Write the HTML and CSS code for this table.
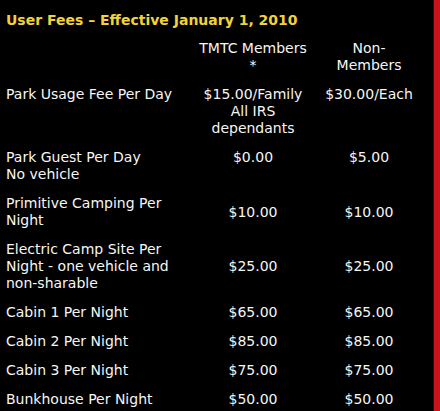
FILE: index.html
```html
<!DOCTYPE html>
<html>
<head>
<meta charset="utf-8">
<link rel="stylesheet" href="styles.css">
</head>
<body>
<div class="page">
  <div class="content">
    <h2 class="title">User Fees – Effective January 1, 2010</h2>
    <table class="fees">
      <colgroup><col class="c1"><col class="c2"><col class="c3"></colgroup>
      <tr class="head top">
        <td></td>
        <td>TMTC Members *</td>
        <td>Non-Members</td>
      </tr>
      <tr class="top">
        <td>Park Usage Fee Per Day</td>
        <td>$15.00/Family All IRS dependants</td>
        <td>$30.00/Each</td>
      </tr>
      <tr class="top">
        <td>Park Guest Per Day<br>No vehicle</td>
        <td>$0.00</td>
        <td>$5.00</td>
      </tr>
      <tr>
        <td>Primitive Camping Per Night</td>
        <td>$10.00</td>
        <td>$10.00</td>
      </tr>
      <tr>
        <td>Electric Camp Site Per Night - one vehicle and non-sharable</td>
        <td>$25.00</td>
        <td>$25.00</td>
      </tr>
      <tr>
        <td>Cabin 1 Per Night</td>
        <td>$65.00</td>
        <td>$65.00</td>
      </tr>
      <tr>
        <td>Cabin 2 Per Night</td>
        <td>$85.00</td>
        <td>$85.00</td>
      </tr>
      <tr>
        <td>Cabin 3 Per Night</td>
        <td>$75.00</td>
        <td>$75.00</td>
      </tr>
      <tr>
        <td>Bunkhouse Per Night</td>
        <td>$50.00</td>
        <td>$50.00</td>
      </tr>
    </table>
  </div>
  <div class="edge"></div>
</div>
</body>
</html>
```
FILE: styles.css
```css
html, body {
  margin: 0;
  padding: 0;
  background: #000;
}
.page {
  display: flex;
  width: 440px;
  height: 411px;
  overflow: hidden;
}
.content {
  flex: 1;
  background: #000;
  color: #f6f6f6;
  font-family: "DejaVu Sans", Verdana, sans-serif;
  font-size: 14px;
  line-height: 17px;
}
.edge {
  width: 6px;
  background: #c8141a;
  border-left: 1px solid #3a0a0a;
}
.title {
  margin: 0;
  padding: 11px 0 0 6px;
  font-size: 14px;
  font-weight: bold;
  color: #f2d23a;
  line-height: 18px;
}
.fees {
  border-collapse: collapse;
  margin-top: 5px;
  table-layout: fixed;
  width: 422px;
}
.c1 { width: 190px; }
.c2 { width: 126px; }
.c3 { width: 106px; }
.fees td {
  padding: 6px 8px;
  vertical-align: middle;
  text-align: center;
}
.fees td:first-child {
  text-align: left;
  padding-left: 6px;
  padding-right: 6px;
}
.fees td:last-child {
  padding-left: 7px;
  padding-right: 7px;
}
.fees tr.top td {
  vertical-align: top;
}
```
